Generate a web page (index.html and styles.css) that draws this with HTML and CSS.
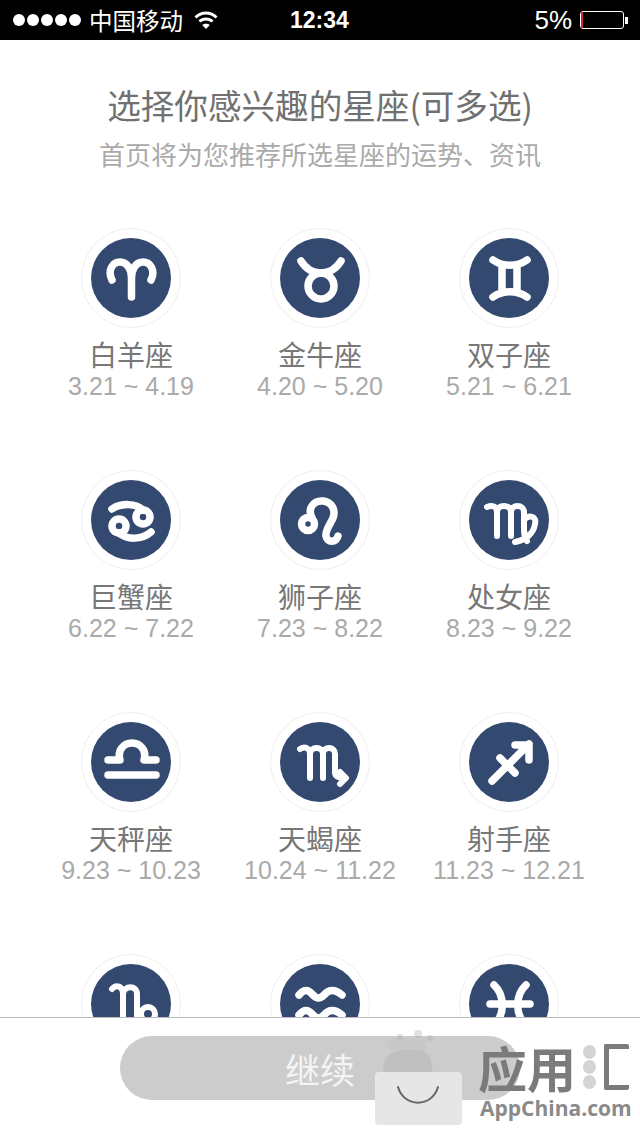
FILE: index.html
```html
<!DOCTYPE html>
<html>
<head>
  <title>选择星座</title>
  <meta charset="UTF-8">
  <link rel="stylesheet" href="styles.css">
</head>
<body>
  <div class="phone">
    <div class="status-bar">
      <div class="status-left">
        <div class="signal"><i></i><i></i><i></i><i></i><i></i></div>
        <span class="carrier">中国移动</span>
        <svg class="wifi" width="24" height="20" viewBox="0 0 24 20"><path d="M1.5 7.5C7.5 1.5 16.5 1.5 22.5 7.5M5.5 11.5C9 8 15 8 18.5 11.5"/><path class="wifi-tip" d="M12 19L8.2 15C10.2 13.2 13.8 13.2 15.8 15Z"/></svg>
      </div>
      <div class="status-time">12:34</div>
      <div class="status-right">
        <span class="percent">5%</span>
        <div class="battery"><i></i></div>
        <div class="battery-nub"></div>
      </div>
    </div>

    <div class="page-header">
      <h1>选择你感兴趣的星座(可多选)</h1>
      <p>首页将为您推荐所选星座的运势、资讯</p>
    </div>

    <div class="sign-grid">
      <div class="sign">
        <div class="ring"><div class="disc">
          <svg viewBox="0 0 80 80"><path d="M21 42C16 32 22 24 29 24C36 24 40.5 31 40.5 40V59M60 42C65 32 59 24 52 24C45 24 40.5 31 40.5 40"/></svg>
        </div></div>
        <div class="sign-name">白羊座</div>
        <div class="sign-date">3.21 ~ 4.19</div>
      </div>
      <div class="sign">
        <div class="ring"><div class="disc">
          <svg viewBox="0 0 80 80"><circle cx="41" cy="48" r="13"/><path d="M21 23C26 31 33 35 41 35C49 35 56 31 61 23"/></svg>
        </div></div>
        <div class="sign-name">金牛座</div>
        <div class="sign-date">4.20 ~ 5.20</div>
      </div>
      <div class="sign">
        <div class="ring"><div class="disc">
          <svg viewBox="0 0 80 80"><path d="M24 22C34 29 48 29 58 22M24 59C34 52 48 52 58 59M33 27V54M48 27V54"/></svg>
        </div></div>
        <div class="sign-name">双子座</div>
        <div class="sign-date">5.21 ~ 6.21</div>
      </div>

      <div class="sign">
        <div class="ring"><div class="disc">
          <svg viewBox="0 0 80 80"><circle cx="28" cy="46" r="7"/><circle cx="52" cy="37" r="7"/><path d="M21 29C30 23 45 23 52 30M28 53C36 60 51 60 60 52"/></svg>
        </div></div>
        <div class="sign-name">巨蟹座</div>
        <div class="sign-date">6.22 ~ 7.22</div>
      </div>
      <div class="sign">
        <div class="ring"><div class="disc">
          <svg viewBox="0 0 80 80"><circle cx="28" cy="44" r="6.5"/><path d="M32 38C27 28 34 20 43 21C52 22 56 30 53 38C50 45 45 50 46 56C47 63 56 63 58 56"/></svg>
        </div></div>
        <div class="sign-name">狮子座</div>
        <div class="sign-date">7.23 ~ 8.22</div>
      </div>
      <div class="sign">
        <div class="ring"><div class="disc">
          <svg class="thin" viewBox="0 0 80 80"><path d="M18 27C23 25 28 26 28 32V56M28 32C28 24 42 24 42 32V56M42 32C42 24 55 24 55 32V50C55 54 56 58 58 61M55 40C60 34 68 36 66 44C65 52 58 60 46 62"/></svg>
        </div></div>
        <div class="sign-name">处女座</div>
        <div class="sign-date">8.23 ~ 9.22</div>
      </div>

      <div class="sign">
        <div class="ring"><div class="disc">
          <svg viewBox="0 0 80 80"><path d="M17 38H29C26 28 33 21 41 21C49 21 56 28 53 38H65M17 53H65"/></svg>
        </div></div>
        <div class="sign-name">天秤座</div>
        <div class="sign-date">9.23 ~ 10.23</div>
      </div>
      <div class="sign">
        <div class="ring"><div class="disc">
          <svg class="thin" viewBox="0 0 80 80"><path d="M20 27C25 24 30 26 30 32V56M30 32C30 24 43 24 43 32V56M43 32C43 24 55 24 55 32V50C55 54 58 56 65 56M60 50L66 56L60 62"/></svg>
        </div></div>
        <div class="sign-name">天蝎座</div>
        <div class="sign-date">10.24 ~ 11.22</div>
      </div>
      <div class="sign">
        <div class="ring"><div class="disc">
          <svg viewBox="0 0 80 80"><path d="M23 59L60 22M46 23H60V38M31 36L46 51"/></svg>
        </div></div>
        <div class="sign-name">射手座</div>
        <div class="sign-date">11.23 ~ 12.21</div>
      </div>

      <div class="sign">
        <div class="ring"><div class="disc">
          <svg class="thin" viewBox="0 0 80 80"><circle cx="57" cy="50" r="7"/><path d="M21 25C25 20 32 22 32 30V60M32 30C33 21 46 21 46 30V52C46 60 42 64 38 66"/></svg>
        </div></div>
        <div class="sign-name">摩羯座</div>
        <div class="sign-date">12.22 ~ 1.20</div>
      </div>
      <div class="sign">
        <div class="ring"><div class="disc">
          <svg viewBox="0 0 80 80"><path d="M19 31C24 25 28 25 33 31C37 35 40 35 44 31C49 25 55 25 62 31M19 51C24 45 28 45 33 51C37 55 40 55 44 51C49 45 55 45 62 51"/></svg>
        </div></div>
        <div class="sign-name">水瓶座</div>
        <div class="sign-date">1.21 ~ 2.19</div>
      </div>
      <div class="sign">
        <div class="ring"><div class="disc">
          <svg viewBox="0 0 80 80"><path d="M25 21C36 31 36 51 25 61M57 21C46 31 46 51 57 61M21 40H61"/></svg>
        </div></div>
        <div class="sign-name">双鱼座</div>
        <div class="sign-date">2.20 ~ 3.20</div>
      </div>
    </div>

    <div class="footer">
      <button class="next-button">继续</button>
    </div>

    <!-- 水印 -->
    <div class="watermark">
      <svg class="wm-bag" width="90" height="100" viewBox="0 0 90 100">
        <circle cx="44" cy="4" r="4" class="wm-ball"/>
        <circle cx="56" cy="8" r="3" class="wm-ball"/>
        <circle cx="26" cy="7" r="3" class="wm-ball"/>
        <path d="M14 8H52V20H14Z" class="wm-neck"/>
        <path d="M9 42C9 28 16 20 30 20H44C54 20 59 30 58 42Z" class="wm-ball"/>
        <rect x="1" y="42" width="87" height="53" rx="4" class="wm-body"/>
        <path d="M24 57C30 78 58 78 64 57" class="wm-smile"/>
      </svg>
      <div class="wm-logo">
        <div class="wm-title">
          <span class="wm-cn">应用</span>
          <div class="wm-dots"><i></i><i></i><i></i></div>
          <div class="wm-box"></div>
        </div>
        <div class="wm-en">AppChina.com</div>
      </div>
    </div>
  </div>
</body>
</html>
```

FILE: styles.css
```css
body {
  margin: 0;
  background: #fff;
  font-family: "Liberation Sans", "Noto Sans CJK SC", sans-serif;
}

.phone {
  position: relative;
  width: 640px;
  height: 1136px;
  overflow: hidden;
  background: #fff;
}

/* 状态栏 */
.status-bar {
  display: flex;
  justify-content: space-between;
  align-items: center;
  position: relative;
  height: 40px;
  padding: 0 12px 0 13px;
  background: #000;
  color: #fff;
}

.status-left,
.status-right {
  display: flex;
  align-items: center;
}

.signal {
  display: flex;
  gap: 2px;
}

.signal i {
  width: 12px;
  height: 12px;
  border-radius: 50%;
  background: #fff;
}

.carrier {
  margin-left: 8px;
  font-size: 23.5px;
  font-family: "Noto Sans CJK SC", sans-serif;
}

.wifi {
  margin-left: 11px;
}

.wifi path {
  fill: none;
  stroke: #fff;
  stroke-width: 3;
}

.wifi .wifi-tip {
  fill: #fff;
  stroke: none;
}

.status-time {
  position: absolute;
  left: 290px;
  font-size: 23px;
  font-weight: bold;
}

.percent {
  font-size: 26px;
}

.battery {
  width: 44px;
  height: 18px;
  margin-left: 8px;
  border: 1px solid #fff;
  border-radius: 3px;
  box-sizing: border-box;
}

.battery i {
  display: block;
  width: 2px;
  height: 100%;
  background: #d0203a;
}

.battery-nub {
  width: 3px;
  height: 7px;
  margin-left: 1px;
  background: #fff;
}

/* 标题 */
.page-header {
  padding-top: 43px;
  text-align: center;
}

.page-header h1 {
  margin: 0;
  font-size: 33.6px;
  line-height: 44px;
  font-weight: normal;
  color: #707070;
  font-family: "Noto Sans CJK SC", sans-serif;
}

.page-header p {
  margin: 5px 0 0;
  font-size: 26px;
  line-height: 44px;
  color: #aaa;
  font-family: "Noto Sans CJK SC", sans-serif;
}

/* 星座列表 */
.sign-grid {
  display: grid;
  grid-template-columns: repeat(3, 189px);
  grid-auto-rows: 242px;
  justify-content: center;
  padding-top: 52px;
}

.sign {
  display: flex;
  flex-direction: column;
  align-items: center;
}

.ring {
  display: flex;
  justify-content: center;
  align-items: center;
  width: 100px;
  height: 100px;
  border: 1px solid #eee;
  border-radius: 50%;
  box-sizing: border-box;
}

.disc {
  width: 80px;
  height: 80px;
  border-radius: 50%;
  background: #34496f;
}

.disc svg {
  display: block;
  width: 80px;
  height: 80px;
}

.disc path,
.disc circle {
  fill: none;
  stroke: #fff;
  stroke-width: 7.5;
  stroke-linecap: round;
  stroke-linejoin: round;
}

.disc .thin path,
.disc .thin circle {
  stroke-width: 6;
}

.sign-name {
  margin-top: 8px;
  font-size: 28px;
  line-height: 36px;
  color: #777;
  font-family: "Noto Sans CJK SC", sans-serif;
}

.sign-date {
  font-size: 25px;
  line-height: 28px;
  color: #aaa;
}

/* 底部按钮 */
.footer {
  display: flex;
  justify-content: center;
  position: absolute;
  left: 0;
  right: 0;
  bottom: 0;
  height: 119px;
  padding-top: 18px;
  box-sizing: border-box;
  border-top: 1px solid #bbb;
  background: #fff;
}

.next-button {
  width: 400px;
  height: 64px;
  border: none;
  border-radius: 32px;
  background: #ccc;
  color: #f4f4f4;
  font-size: 35px;
  font-family: "Noto Sans CJK SC", sans-serif;
}

/* 水印 */
.watermark {
  position: absolute;
  left: 374px;
  top: 1030px;
  display: flex;
  gap: 14px;
}

.wm-ball {
  fill: #aaa;
  fill-opacity: 0.35;
}

.wm-neck {
  fill: #aaa;
  fill-opacity: 0.12;
}

.wm-body {
  fill: #e6e6e6;
}

.wm-smile {
  fill: none;
  stroke: #666;
  stroke-width: 2;
  stroke-linecap: round;
}

.wm-logo {
  padding-top: 8px;
}

.wm-title {
  display: flex;
  align-items: center;
  height: 58px;
}

.wm-cn {
  font-size: 49px;
  line-height: 56px;
  font-weight: bold;
  color: #7b7b7b;
  font-family: "Noto Sans CJK SC", sans-serif;
}

.wm-dots {
  display: flex;
  flex-direction: column;
  gap: 1px;
  margin-left: 7px;
}

.wm-dots i {
  width: 13px;
  height: 14px;
  border-radius: 50%;
  background: #d4d4d4;
}

.wm-box {
  width: 20px;
  height: 36px;
  margin-left: 8px;
  border: 5px solid #7b7b7b;
  border-right: none;
  border-radius: 2px;
}

.wm-en {
  padding-left: 2px;
  font-size: 21px;
  line-height: 24px;
  font-weight: bold;
  color: #8a8a8a;
  font-family: "Open Sans", sans-serif;
}
```
